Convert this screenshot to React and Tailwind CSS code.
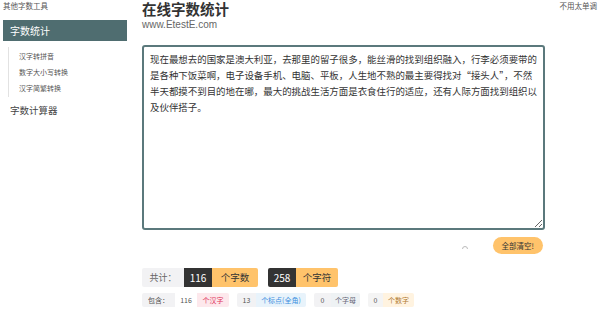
import React from "react";

const text =
  "现在最想去的国家是澳大利亚，去那里的留子很多，能丝滑的找到组织融入，行李必须要带的是各种下饭菜啊，电子设备手机、电脑、平板，人生地不熟的最主要得找对“接头人”，不然半天都摸不到目的地在哪，最大的挑战生活方面是衣食住行的适应，还有人际方面找到组织以及伙伴搭子。";

export default function App() {
  return (
    <div
      className="w-[600px] h-[313px] bg-white overflow-hidden text-[#333]"
      style={{ fontFamily: '"Noto Sans CJK SC", "Noto Sans", sans-serif' }}
    >
      <div className="flex">
        <aside className="w-[142px] shrink-0 pl-[3px] pt-[1px]">
          <div className="text-[7.5px] leading-[10px] h-[19px] text-[#555]">其他字数工具</div>
          <div className="w-[124px] h-[21px] bg-[#4f6d70] text-white text-[10px] pl-[7px] flex items-center">
            字数统计
          </div>
          <ul className="ml-[5px] mt-[6px] border-l border-[#e2e2e2] pl-[10px] py-[1px]">
            <li className="h-[16px] flex items-center text-[7px] text-[#555]">汉字转拼音</li>
            <li className="h-[16px] flex items-center text-[7px] text-[#555]">数字大小写转换</li>
            <li className="h-[16px] flex items-center text-[7px] text-[#555]">汉字简繁转换</li>
          </ul>
          <div className="pl-[7px] mt-[7px] text-[9.5px] leading-[12px] text-[#444]">字数计算器</div>
        </aside>
        <main className="w-[403px] shrink-0">
          <h1
            className="text-[14.5px] font-bold leading-[17px] mt-[2px] text-[#333]"
            style={{ fontFamily: '"Liberation Sans", "Noto Sans CJK SC", sans-serif' }}
          >
            在线字数统计
          </h1>
          <div
            className="text-[10px] leading-[11px] text-[#666]"
            style={{ fontFamily: '"Liberation Sans", "Noto Sans", sans-serif' }}
          >
            www.EtestE.com
          </div>
          <textarea
            className="mt-[15px] block w-[403px] h-[185px] border-2 border-[#5b797c] rounded-[3px] px-[6px] py-[4px] text-[9.45px] leading-[16px] text-[#333] outline-none"
            defaultValue={text}
          />
          <div className="flex items-center justify-end h-[19px] mt-[6px] pr-[2px]">
            <svg width="8" height="8" viewBox="0 0 8 8" className="mr-[24px] mt-[6px]">
              <path d="M1.5 4 A2.5 2.5 0 0 1 6.5 4" fill="none" stroke="#bbb" strokeWidth="1" />
            </svg>
            <button className="h-[17px] px-[9px] rounded-full bg-[#ffc36b] text-[7.5px] text-[#333] flex items-center">
              全部清空!
            </button>
          </div>
          <div className="flex mt-[13px] gap-[10px] h-[19px]">
            <div className="flex">
              <div className="w-[42px] bg-[#f2f2f4] text-[#666] text-[9px] flex items-center justify-center rounded-l-[2px]">
                共计：
              </div>
              <div className="w-[28px] bg-[#333] text-white text-[10px] flex items-center justify-center">116</div>
              <div className="w-[46px] bg-[#ffc36b] text-[#333] text-[9.5px] flex items-center justify-center rounded-r-[2px]">
                个字数
              </div>
            </div>
            <div className="flex">
              <div className="w-[28px] bg-[#333] text-white text-[10px] flex items-center justify-center rounded-l-[2px]">
                258
              </div>
              <div className="w-[42px] bg-[#ffc36b] text-[#333] text-[9.5px] flex items-center justify-center rounded-r-[2px]">
                个字符
              </div>
            </div>
          </div>
          <div className="flex mt-[6px] gap-[8px] h-[14px] text-[7px]">
            <div className="flex">
              <div className="w-[33px] bg-[#f2f2f4] text-[#555] flex items-center justify-center rounded-l-[2px]">包含：</div>
              <div className="w-[22px] bg-white text-[#555] flex items-center justify-center">116</div>
              <div className="w-[32px] bg-[#fde8ec] text-[#e0335a] flex items-center justify-center rounded-r-[2px]">个汉字</div>
            </div>
            <div className="flex">
              <div className="w-[19px] bg-[#f2f2f4] text-[#555] flex items-center justify-center rounded-l-[2px]">13</div>
              <div className="w-[50px] bg-[#e8f3fb] text-[#3a8ee0] flex items-center justify-center rounded-r-[2px]">个标点(全角)</div>
            </div>
            <div className="flex">
              <div className="w-[17px] bg-[#f2f2f4] text-[#555] flex items-center justify-center rounded-l-[2px]">0</div>
              <div className="w-[29px] bg-[#eef2f4] text-[#667] flex items-center justify-center rounded-r-[2px]">个字母</div>
            </div>
            <div className="flex">
              <div className="w-[15px] bg-[#f4f4f4] text-[#555] flex items-center justify-center rounded-l-[2px]">0</div>
              <div className="w-[31px] bg-[#fff3e0] text-[#b07a30] flex items-center justify-center rounded-r-[2px]">个数字</div>
            </div>
          </div>
        </main>
        <div className="flex-1 text-right pr-[3px] pt-[1px] text-[7.5px] leading-[10px] text-[#555]">不用太单调</div>
      </div>
    </div>
  );
}
